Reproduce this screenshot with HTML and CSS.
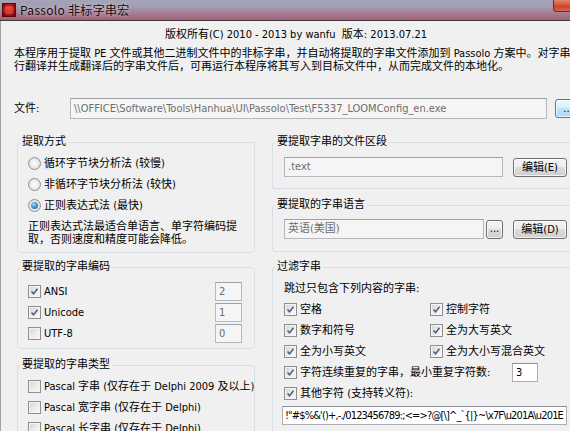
FILE: index.html
```html
<!DOCTYPE html>
<html lang="zh-CN">
<head>
<meta charset="utf-8">
<title>Passolo 非标字串宏</title>
<link rel="stylesheet" href="styles.css">
</head>
<body>
<div class="window">
  <div class="titlebar">
    <svg class="app-icon" width="14" height="14" viewBox="0 0 14 14">
      <defs>
        <radialGradient id="ig" cx="50%" cy="45%" r="60%">
          <stop offset="0" stop-color="#f04a3a"/>
          <stop offset="0.6" stop-color="#b81c1c"/>
          <stop offset="1" stop-color="#6e0a0a"/>
        </radialGradient>
      </defs>
      <rect x="0.5" y="0.5" width="13" height="13" fill="url(#ig)" stroke="#5a0808"/>
      <path d="M4 4h6v6H4z" fill="none" stroke="#ff8a70" stroke-width="0.8" opacity="0.6"/>
    </svg>
    <span class="title">Passolo 非标字串宏</span>
    <div class="close"></div>
  </div>
  <div class="client">
    <div class="copyright">版权所有(C) 2010 - 2013 by wanfu&nbsp;&nbsp;版本: 2013.07.21</div>
    <div class="desc">
      <div class="dline">本程序用于提取 PE 文件或其他二进制文件中的非标字串，并自动将提取的字串文件添加到 Passolo 方案中。对字串</div>
      <div class="dline">行翻译并生成翻译后的字串文件后，可再运行本程序将其写入到目标文件中，从而完成文件的本地化。</div>
    </div>
    <div class="file-row">
      <span class="file-label">文件:</span>
      <div class="tb disabled file-tb">\\OFFICE\Software\Tools\Hanhua\UI\Passolo\Test\F5337_LOOMConfig_en.exe</div>
      <div class="btn hot file-btn">...</div>
    </div>
    <div class="cols">
      <div class="col">
        <fieldset class="group">
          <legend>提取方式</legend>
          <div class="gbody g-method">
            <div class="row"><span class="radio"></span><span>循环字节块分析法 (较慢)</span></div>
            <div class="row"><span class="radio"></span><span>非循环字节块分析法 (较快)</span></div>
            <div class="row"><span class="radio on"></span><span>正则表达式法 (最快)</span></div>
            <div class="note">
              <div class="nline">正则表达式法最适合单语言、单字符编码提</div>
              <div class="nline">取，否则速度和精度可能会降低。</div>
            </div>
          </div>
        </fieldset>
        <fieldset class="group g2">
          <legend>要提取的字串编码</legend>
          <div class="gbody g-enc">
            <div class="row"><span class="cb on"><svg viewBox="0 0 13 13"><path d="M3 6.5 5.4 9.3 10 3.2"/></svg></span><span>ANSI</span><div class="tb disabled num">2</div></div>
            <div class="row"><span class="cb on"><svg viewBox="0 0 13 13"><path d="M3 6.5 5.4 9.3 10 3.2"/></svg></span><span>Unicode</span><div class="tb disabled num">1</div></div>
            <div class="row"><span class="cb"></span><span>UTF-8</span><div class="tb disabled num">0</div></div>
          </div>
        </fieldset>
        <fieldset class="group g3">
          <legend>要提取的字串类型</legend>
          <div class="gbody g-type">
            <div class="row"><span class="cb"></span><span>Pascal 字串 (仅存在于 Delphi 2009 及以上)</span></div>
            <div class="row"><span class="cb"></span><span>Pascal 宽字串 (仅存在于 Delphi)</span></div>
            <div class="row"><span class="cb"></span><span>Pascal 长字串 (仅存在于 Delphi)</span></div>
          </div>
        </fieldset>
      </div>
      <div class="col">
        <fieldset class="group">
          <legend>要提取字串的文件区段</legend>
          <div class="gbody g-sec">
            <div class="row">
              <div class="tb disabled sec-tb">.text</div>
              <div class="btn edit">编辑(E)</div>
            </div>
          </div>
        </fieldset>
        <fieldset class="group gB">
          <legend>要提取的字串语言</legend>
          <div class="gbody g-lang">
            <div class="row">
              <div class="tb disabled lang-tb">英语(美国)</div>
              <div class="btn small">...</div>
              <div class="btn edit">编辑(D)</div>
            </div>
          </div>
        </fieldset>
        <fieldset class="group gC">
          <legend>过滤字串</legend>
          <div class="gbody g-filter">
            <div class="skip">跳过只包含下列内容的字串:</div>
            <div class="fgrid">
              <div class="row"><span class="cb on"><svg viewBox="0 0 13 13"><path d="M3 6.5 5.4 9.3 10 3.2"/></svg></span><span>空格</span></div>
              <div class="row"><span class="cb on"><svg viewBox="0 0 13 13"><path d="M3 6.5 5.4 9.3 10 3.2"/></svg></span><span>控制字符</span></div>
              <div class="row"><span class="cb on"><svg viewBox="0 0 13 13"><path d="M3 6.5 5.4 9.3 10 3.2"/></svg></span><span>数字和符号</span></div>
              <div class="row"><span class="cb on"><svg viewBox="0 0 13 13"><path d="M3 6.5 5.4 9.3 10 3.2"/></svg></span><span>全为大写英文</span></div>
              <div class="row"><span class="cb on"><svg viewBox="0 0 13 13"><path d="M3 6.5 5.4 9.3 10 3.2"/></svg></span><span>全为小写英文</span></div>
              <div class="row"><span class="cb on"><svg viewBox="0 0 13 13"><path d="M3 6.5 5.4 9.3 10 3.2"/></svg></span><span>全为大小写混合英文</span></div>
              <div class="row span2"><span class="cb on"><svg viewBox="0 0 13 13"><path d="M3 6.5 5.4 9.3 10 3.2"/></svg></span><span>字符连续重复的字串，最小重复字符数:</span><div class="tb rep">3</div></div>
              <div class="row span2"><span class="cb on"><svg viewBox="0 0 13 13"><path d="M3 6.5 5.4 9.3 10 3.2"/></svg></span><span>其他字符 (支持转义符):</span></div>
            </div>
            <div class="tb other">!"#$%&amp;'()+,-./0123456789:;&lt;=&gt;?@[\]^_`{|}~\x7F\u201A\u201E</div>
          </div>
        </fieldset>
      </div>
    </div>
  </div>
</div>
</body>
</html>
```
FILE: styles.css
```css
* { box-sizing: border-box; }
html, body { margin: 0; padding: 0; overflow: hidden; }
body {
  width: 570px;
  height: 431px;
  background: #f0f0f0;
  font-family: "DejaVu Sans Condensed", "DejaVu Sans", "Noto Sans CJK SC", sans-serif;
  font-stretch: condensed;
  font-size: 11px;
  color: #000;
}
.window {
  width: 594px;
  height: 431px;
  display: flex;
  flex-direction: column;
}
.titlebar {
  flex: none;
  height: 21px;
  display: flex;
  align-items: flex-start;
  padding: 3px 0 0 2px;
  background: linear-gradient(to bottom, #a2a4b8 0%, #a69cb1 35%, #a67a90 70%, #9f6075 100%);
  border-bottom: 1px solid #3e3a3c;
}
.app-icon { flex: none; }
.title {
  margin-left: 4px;
  margin-top: -1px;
  font-family: "Noto Sans CJK SC", sans-serif;
  font-stretch: normal;
  font-size: 12px;
  line-height: 15px;
  letter-spacing: 0.3px;
  color: #111;
  text-shadow: 0 0 4px rgba(255,255,255,0.6);
}
.close {
  margin-left: auto;
  margin-right: 3px;
  margin-top: -3px;
  width: 38px;
  height: 12px;
  border: 1px solid #6b2a22;
  border-top: none;
  border-radius: 0 0 4px 4px;
  background: linear-gradient(to bottom, #e2856f, #c9452d 60%, #d86a48);
}
.client {
  flex: 1;
  background: #f0f0f0;
  border-left: 1px solid #a3a3a3;
  padding: 7px 16px 0 13px;
}
.copyright {
  text-align: center;
  line-height: 14px;
  white-space: nowrap;
}
.desc {
  margin-top: 5px;
  white-space: nowrap;
}
.dline { height: 13px; line-height: 13px; }
.file-row {
  margin-top: 25px;
  height: 21px;
  display: flex;
  align-items: center;
}
.file-label { width: 56px; flex: none; line-height: 14px; }
.tb {
  flex: none;
  border: 1px solid #abadb3;
  border-top-color: #8e9197;
  background: #fff;
  padding: 0 3px;
  line-height: 17px;
  white-space: nowrap;
  overflow: hidden;
}
.tb.disabled {
  background: #f5f5f5;
  color: #6d6d6d;
  border-color: #b5b8bd;
  border-top-color: #9ea1a6;
}
.file-tb { width: 477px; height: 21px; line-height: 19px; }
.btn {
  flex: none;
  height: 19px;
  border: 1px solid #707070;
  border-radius: 3px;
  background: linear-gradient(to bottom, #f4f4f4 0%, #ececec 45%, #dcdcdc 50%, #cfcfcf 100%);
  box-shadow: inset 0 0 0 1px rgba(255,255,255,0.7);
  text-align: center;
  line-height: 17px;
  white-space: nowrap;
}
.btn.hot {
  border-color: #3c7fb1;
  background: linear-gradient(to bottom, #eaf6fd 0%, #d9f0fc 45%, #bee6fd 50%, #a7d9f5 100%);
}
.file-btn { width: 26px; margin-left: 8px; }
.cols {
  margin: 16px 0 0 3px;
  display: grid;
  grid-template-columns: 238px 306px;
  column-gap: 17px;
  align-items: start;
}
.col { display: flex; flex-direction: column; }
.group {
  margin: 0;
  padding: 0;
  min-width: 0;
  border: 1px solid #d5dfe5;
  border-radius: 3px;
}
.group legend {
  margin-left: 2px;
  padding: 0 2px;
  line-height: 14px;
}
.gbody { padding: 0 10px; }
.row {
  height: 21px;
  display: flex;
  align-items: center;
  gap: 2px;
  white-space: nowrap;
  line-height: 14px;
}
.g-method { padding: 4px 10px 6px 10px; }
.note { margin-top: 4px; white-space: nowrap; }
.nline { height: 13px; line-height: 13px; }
.g2 { margin-top: 7px; }
.g-enc { padding: 7px 12px 4px 10px; }
.num { margin-left: auto; width: 27px; height: 19px; }
.g3 { margin-top: 9px; height: 90px; border-bottom: none; }
.g-type { padding: 4px 10px 0 10px; }
.radio {
  flex: none;
  width: 13px;
  height: 13px;
  border-radius: 50%;
  border: 1px solid #8f8f8f;
  background: radial-gradient(circle at 50% 50%, #fefefe 0, #f0f0f0 40%, #d0d0d0 100%);
  position: relative;
  margin-right: 1px;
}
.radio.on::after {
  content: "";
  position: absolute;
  left: 2px; top: 2px;
  width: 7px; height: 7px;
  border-radius: 50%;
  background: radial-gradient(circle at 40% 35%, #a6d9f7 0, #3d8fcf 50%, #1d5a93 100%);
}
.cb {
  flex: none;
  width: 13px;
  height: 13px;
  border: 1px solid #8e8f8f;
  background: linear-gradient(135deg, #d4d4d4 0%, #ececec 55%, #fbfbfb 100%);
  box-shadow: inset 0 0 0 1px #f4f4f4;
  display: flex;
  margin-right: 1px;
}
.cb svg { width: 11px; height: 11px; }
.cb path { fill: none; stroke: #4b5a80; stroke-width: 1.8; }
.g-sec { padding: 8px 10px 11px 11px; }
.g-sec .row, .g-lang .row { height: 20px; gap: 0; }
.sec-tb { width: 219px; height: 20px; }
.edit { margin-left: auto; width: 54px; }
.gB { margin-top: 9px; }
.g-lang { padding: 7px 10px 12px 11px; }
.lang-tb { width: 200px; height: 20px; }
.small { width: 17px; margin-left: 2px; line-height: 15px; }
.gC { margin-top: 8px; height: 180px; border-bottom: none; }
.g-filter { padding: 8px 10px 0 11px; }
.skip { line-height: 14px; white-space: nowrap; }
.fgrid {
  margin-top: 3px;
  display: grid;
  grid-template-columns: 146px 1fr;
}
.span2 { grid-column: 1 / span 2; }
.rep { margin-left: auto; margin-right: 29px; width: 26px; height: 19px; }
.other { margin: 2px 0 0 -2px; height: 19px; width: 285px; letter-spacing: -0.85px; padding-left: 2px; }
```
